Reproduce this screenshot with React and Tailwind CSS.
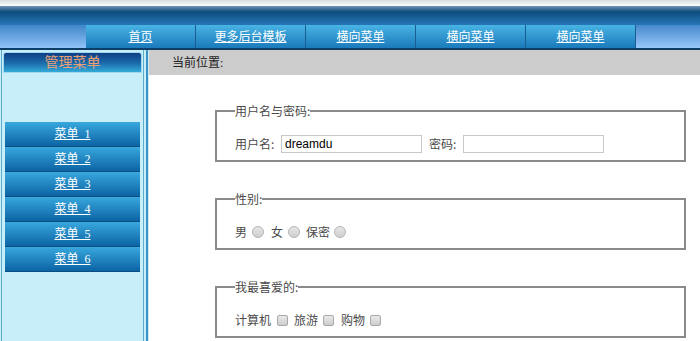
export default function App() {
  const nav = ["首页", "更多后台模板", "横向菜单", "横向菜单", "横向菜单"];
  const menus = [1, 2, 3, 4, 5, 6];
  const cjk = { fontFamily: '"Noto Sans CJK SC", "Liberation Sans", sans-serif' };
  const serif = { fontFamily: '"Liberation Serif", "Noto Sans CJK SC", serif' };
  return (
    <div className="w-[700px] h-[341px] overflow-hidden bg-white" style={cjk}>
      {/* header */}
      <div className="h-[6px] bg-linear-to-b from-[#d9dde1] to-[#fbfbfb]" />
      <div className="h-[19px] bg-linear-to-b from-[#6f95b5] via-[#0d4d7d] via-30% to-[#2676b6]" />
      <div className="h-[25px] flex border-b-2 border-[#0c3d66]">
        <div className="w-[86px] bg-linear-to-b from-[#3f86c8] to-[#8fc2f8]" />
        {nav.map((n, i) => (
          <div
            key={i}
            className="w-[110px] border-r border-[#1a5d92] bg-linear-to-b from-[#48b4e4] to-[#1a7abb] flex items-center justify-center"
          >
            <a href="#" className="text-white underline text-[12px] leading-[14px]" style={serif}>
              {n}
            </a>
          </div>
        ))}
        <div className="flex-1 bg-linear-to-b from-[#4688cc] to-[#98c8fa]" />
      </div>

      {/* body */}
      <div className="flex">
        {/* sidebar */}
        <div className="w-[149px] shrink-0 h-[291px] bg-[#c8eefa] flex">
          <div className="ml-[1px] w-[143px] border-x border-[#5aaccc] flex flex-col pt-[2px]">
            <div className="mx-[1px] h-[21px] border border-[#9fd8f0] rounded-t-[3px] bg-linear-to-b from-[#0f3f84] via-[#1a68a8] to-[#34aad8] flex items-center justify-center">
              <span className="text-[14px] leading-[16px] text-[#eca074]" style={serif}>管理菜单</span>
            </div>
            <div className="h-[49px]" />
            <div className="mx-[3px] flex flex-col">
              {menus.map((m) => (
                <div
                  key={m}
                  className="h-[25px] border-b border-[#0a4f80] bg-linear-to-b from-[#38a8de] to-[#0b64a4] flex items-center justify-center"
                >
                  <a href="#" className="text-white underline text-[12px] leading-[14px] whitespace-pre" style={serif}>
                    {"菜单  " + m}
                  </a>
                </div>
              ))}
            </div>
          </div>
          <div className="w-[2px]" />
          <div className="w-[2px] bg-[#3c92c2]" />
        </div>

        {/* content */}
        <div className="flex-1 flex flex-col">
          <div className="h-[25px] bg-[#cccccc] pl-[23px] flex items-center text-[12px] text-[#222]" style={serif}>
            当前位置:
          </div>

          <fieldset className="mt-[29px] ml-[66px] w-[471px] border-2 border-[#8a8a8a] pl-[18px] pb-[7px]">
            <legend className="text-[12px] leading-[14px] text-[#4a4a4a]">用户名与密码:</legend>
            <div className="mt-[17px] h-[18px] flex items-center text-[12px] text-[#4a4a4a]">
              <span className="w-[46px] shrink-0">用户名:</span>
              <input
                defaultValue="dreamdu"
                className="w-[141px] h-[18px] border border-[#c8c8c8] px-[3px] text-[12px] text-black outline-none"
                style={{ fontFamily: '"Liberation Sans", Arial, sans-serif' }}
              />
              <span className="ml-[7px] w-[34px] shrink-0">密码:</span>
              <input
                className="w-[141px] h-[18px] border border-[#c8c8c8] px-[3px] text-[12px] outline-none"
                style={{ fontFamily: '"Liberation Sans", Arial, sans-serif' }}
              />
            </div>
          </fieldset>

          <fieldset className="mt-[30px] ml-[66px] w-[471px] border-2 border-[#8a8a8a] pl-[18px] pb-[7px]">
            <legend className="text-[12px] leading-[14px] text-[#4a4a4a]">性别:</legend>
            <div className="mt-[17px] h-[18px] flex items-center text-[12px] text-[#4a4a4a]">
              <span>男</span>
              <span className="ml-[5px] w-[12px] h-[12px] rounded-full border border-[#b4b4b4] bg-linear-to-b from-[#e6e6e6] to-[#cfcfcf]" />
              <span className="ml-[7px]">女</span>
              <span className="ml-[5px] w-[12px] h-[12px] rounded-full border border-[#b4b4b4] bg-linear-to-b from-[#e6e6e6] to-[#cfcfcf]" />
              <span className="ml-[6px]">保密</span>
              <span className="ml-[4px] w-[12px] h-[12px] rounded-full border border-[#b4b4b4] bg-linear-to-b from-[#e6e6e6] to-[#cfcfcf]" />
            </div>
          </fieldset>

          <fieldset className="mt-[30px] ml-[66px] w-[471px] border-2 border-[#8a8a8a] pl-[18px] pb-[7px]">
            <legend className="text-[12px] leading-[14px] text-[#4a4a4a]">我最喜爱的:</legend>
            <div className="mt-[17px] h-[18px] flex items-center text-[12px] text-[#4a4a4a]">
              <span>计算机</span>
              <span className="ml-[6px] w-[11px] h-[11px] rounded-[2px] border border-[#a8a8a8] bg-linear-to-b from-[#eaeaea] to-[#cdcdcd]" />
              <span className="ml-[6px]">旅游</span>
              <span className="ml-[5px] w-[11px] h-[11px] rounded-[2px] border border-[#a8a8a8] bg-linear-to-b from-[#eaeaea] to-[#cdcdcd]" />
              <span className="ml-[7px]">购物</span>
              <span className="ml-[5px] w-[11px] h-[11px] rounded-[2px] border border-[#a8a8a8] bg-linear-to-b from-[#eaeaea] to-[#cdcdcd]" />
            </div>
          </fieldset>
        </div>
      </div>
    </div>
  );
}
